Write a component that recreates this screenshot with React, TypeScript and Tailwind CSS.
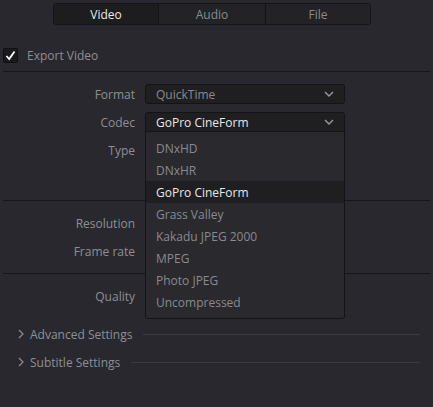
import React from "react";

const Chevron = () => (
  <svg width="10" height="6" viewBox="0 0 10 6" fill="none">
    <path d="M1 1 L5 5 L9 1" stroke="#9a9a9a" strokeWidth="1.4" />
  </svg>
);

const Right = () => (
  <svg width="6" height="10" viewBox="0 0 6 10" fill="none">
    <path d="M1 1 L5 5 L1 9" stroke="#8e8e8e" strokeWidth="1.2" />
  </svg>
);

function Row({ label, children, mt }: { label: string; children?: React.ReactNode; mt: string }) {
  return (
    <div className={`flex items-center h-[20px] ${mt}`}>
      <div className="w-[135px] text-right text-[#8f8f93] pt-[2px]">{label}</div>
      <div className="ml-[10px] w-[200px]">{children}</div>
    </div>
  );
}

export default function App() {
  const items = [
    "DNxHD",
    "DNxHR",
    "GoPro CineForm",
    "Grass Valley",
    "Kakadu JPEG 2000",
    "MPEG",
    "Photo JPEG",
    "Uncompressed",
  ];
  return (
    <div
      className="relative w-[433px] h-[407px] overflow-hidden bg-[#28282e] text-[12px] leading-[16px]"
      style={{ fontFamily: '"Open Sans", "Noto Sans", sans-serif' }}
    >
      <div className="pt-[3px] pl-[53px]">
        <div className="flex w-[318px] h-[22px] rounded-[3px] border border-[#141416] overflow-hidden">
          <div className="flex-1 flex items-center justify-center pt-[2px] bg-[#1d1d20] text-[#e8e8e8]">Video</div>
          <div className="w-[107px] flex items-center justify-center pt-[2px] bg-[#232327] text-[#8a8a8e] border-l border-[#141416]">Audio</div>
          <div className="w-[105px] flex items-center justify-center pt-[2px] bg-[#232327] text-[#8a8a8e] border-l border-[#141416]">File</div>
        </div>
      </div>

      <div className="flex items-center h-[20px] mt-[20px] pl-[3px]">
        <div className="w-[15px] h-[15px] rounded-[2px] border border-[#101012] bg-[#1a1a1c] flex items-center justify-center">
          <svg width="11" height="11" viewBox="0 0 11 11" fill="none">
            <path d="M1.5 6 L4.2 9 L9.5 1.5" stroke="#ffffff" strokeWidth="1.8" />
          </svg>
        </div>
        <span className="ml-[9px] pt-[2px] text-[#8f8f93]">Export Video</span>
      </div>

      <div className="mt-[6px] mx-[3px] h-px bg-[#17171a]" />

      <Row label="Format" mt="mt-[12px]">
        <div className="h-[20px] rounded-[3px] border border-[#141416] bg-[#1f1f22] flex items-center pl-[10px] pr-[10px] text-[#8a8a8e]">
          <span className="flex-1 pt-[2px]">QuickTime</span>
          <Chevron />
        </div>
      </Row>
      <Row label="Codec" mt="mt-[8px]">
        <div className="h-[20px] rounded-t-[3px] border border-[#141416] bg-[#1f1f22] flex items-center pl-[10px] pr-[10px] text-[#e8e8e8]">
          <span className="flex-1 pt-[2px]">GoPro CineForm</span>
          <Chevron />
        </div>
      </Row>
      <Row label="Type" mt="mt-[8px]" />

      <div className="mt-[40px] mx-[3px] h-px bg-[#17171a]" />

      <Row label="Resolution" mt="mt-[12px]" />
      <Row label="Frame rate" mt="mt-[8px]" />

      <div className="mt-[12px] mx-[3px] h-px bg-[#17171a]" />

      <Row label="Quality" mt="mt-[12px]" />

      <div className="flex items-center h-[20px] mt-[18px] pl-[18px]">
        <Right />
        <span className="ml-[6px] pt-[2px] text-[#8f8f93]">Advanced Settings</span>
        <div className="flex-1 ml-[11px] mr-[13px] h-px bg-[#3a3a40]" />
      </div>
      <div className="flex items-center h-[20px] mt-[8px] pl-[18px]">
        <Right />
        <span className="ml-[6px] pt-[2px] text-[#8f8f93]">Subtitle Settings</span>
        <div className="flex-1 ml-[11px] mr-[13px] h-px bg-[#3a3a40]" />
      </div>

      <div className="absolute left-[145px] top-[131px] w-[200px] h-[188px] border border-[#141416] rounded-b-[3px] bg-[#29292e] pt-[5px]">
        {items.map((it) => (
          <div
            key={it}
            className={`h-[22px] flex items-center pl-[10px] pt-[2px] ${
              it === "GoPro CineForm" ? "bg-[#1f1f22] text-[#e8e8e8]" : "text-[#8a8a8e]"
            }`}
          >
            {it}
          </div>
        ))}
      </div>
    </div>
  );
}
